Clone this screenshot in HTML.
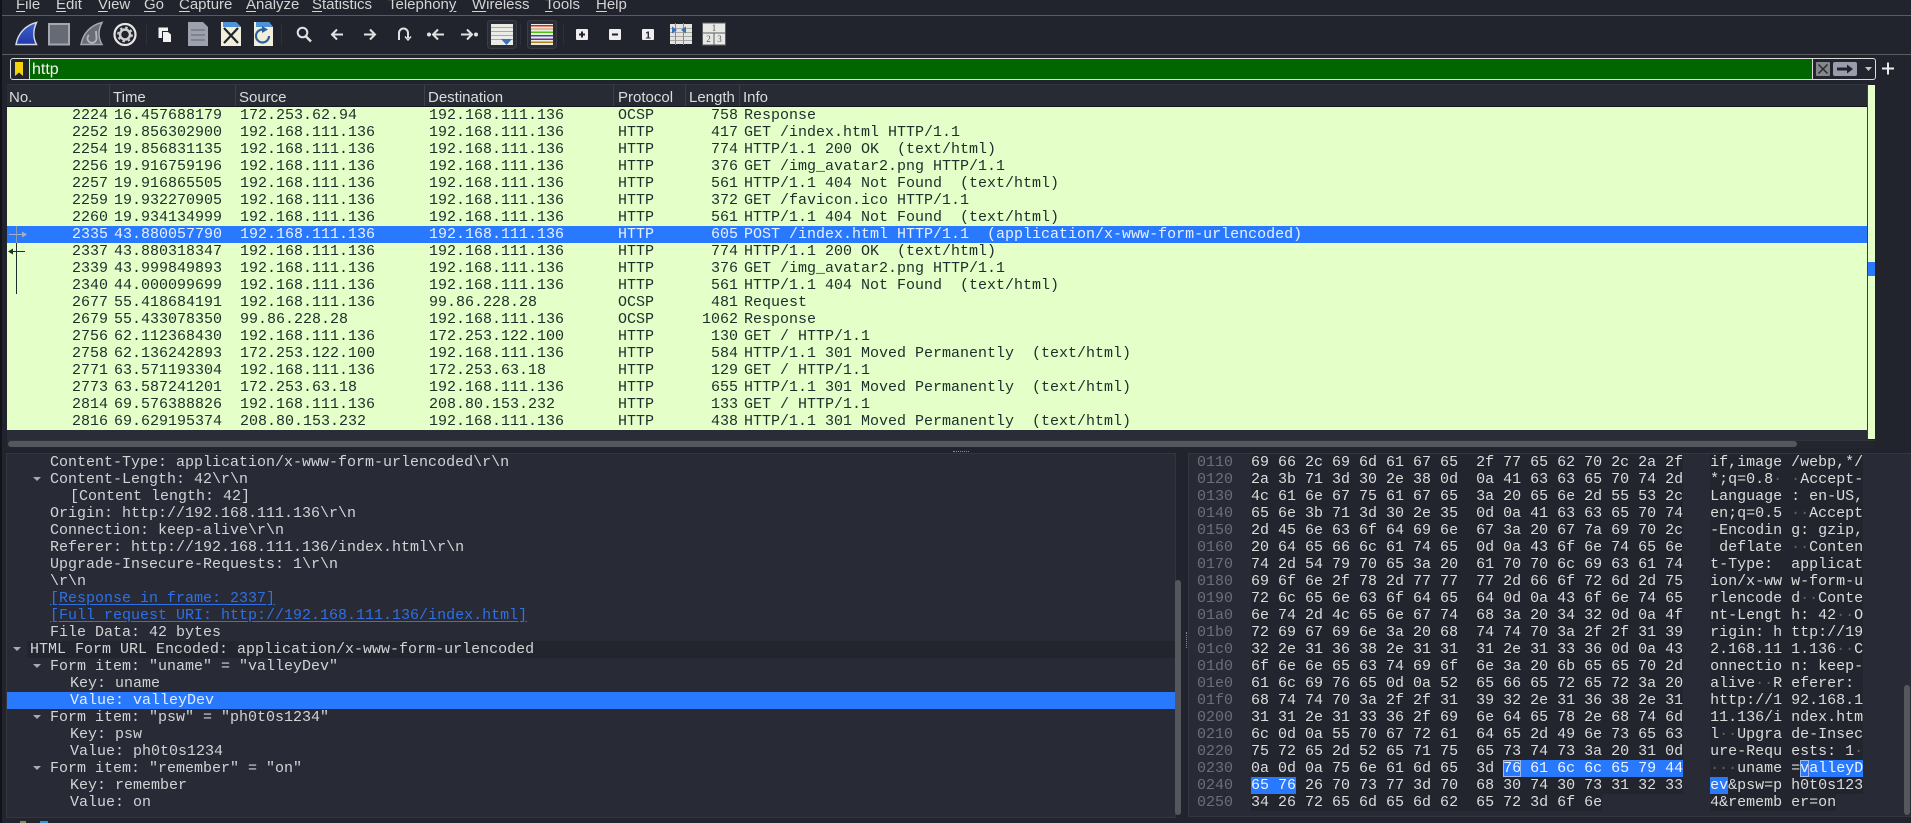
<!DOCTYPE html>
<html><head><meta charset="utf-8"><title>Wireshark</title>
<style>
html,body{margin:0;padding:0;width:1911px;height:823px;overflow:hidden;background:#21242c}
body{position:relative;font-family:"Liberation Sans",sans-serif}
.a{position:absolute}
.m{position:absolute;top:-4px;font-size:15px;line-height:17px;color:#d4d4d4;height:17px}
.m u{text-decoration:underline;text-underline-offset:2px}
.h{position:absolute;top:85px;height:21px;line-height:25px;font-size:15px;color:#dcdcdc}
.s{position:absolute;top:85px;width:1px;height:21px;background:#3b3f49}
#list{position:absolute;left:7px;top:107px;width:1860px;height:323px;background:#e4ffc7;overflow:hidden}
.r{position:absolute;left:-7px;width:1867px;height:17px;font:15px/17px "Liberation Mono",monospace;color:#1f2d2d;white-space:pre}
.r span{position:absolute;top:0}
.r .n{left:72px;width:36px;text-align:right}.r .t{left:114px}.r .o{left:240px}.r .d{left:429px}.r .p{left:618px}.r .l{left:688px;width:50px;text-align:right}.r .i{left:744px}
.r.sel{background:#2979ff;color:#e8f0ff}
.r.sel{left:0;width:1860px}
.r.sel span{margin-left:-7px}
.tr{position:absolute;height:17px;font:15px/17px "Liberation Mono",monospace;color:#d3d3d6;white-space:pre}
.lk{color:#2e70e6;text-decoration:underline;text-underline-offset:2px}
.ar{position:absolute;width:0;height:0;border-left:4px solid transparent;border-right:4px solid transparent;border-top:4px solid #a9abb2}
#hex{position:absolute;left:1197px;top:454px;font:15px/17px "Liberation Mono",monospace;color:#dcdcdc}
#hex div{height:17px;white-space:pre}
#hex b{font-weight:normal;color:#5f626c}
#hex i{font-style:normal;background:#22252d}
#hex em{font-style:normal;background:#2979ff;color:#eef4ff}
#hex em.c{outline:1px solid #9fb8e8;outline-offset:-1px}
#hex q{quotes:none;color:#6c6f78}
</style></head><body>

<div class="a" style="left:0;top:0;width:2px;height:823px;background:#111318"></div>

<div class="m" style="left:16px"><u>F</u>ile</div>
<div class="m" style="left:56px"><u>E</u>dit</div>
<div class="m" style="left:98px"><u>V</u>iew</div>
<div class="m" style="left:144px"><u>G</u>o</div>
<div class="m" style="left:179px"><u>C</u>apture</div>
<div class="m" style="left:246px"><u>A</u>nalyze</div>
<div class="m" style="left:312px"><u>S</u>tatistics</div>
<div class="m" style="left:388px">Telephon<u>y</u></div>
<div class="m" style="left:472px"><u>W</u>ireless</div>
<div class="m" style="left:545px"><u>T</u>ools</div>
<div class="m" style="left:596px"><u>H</u>elp</div>
<div class="a" style="left:2px;top:15px;width:1909px;height:1px;background:#5a5c60"></div>
<div class="a" style="left:2px;top:54px;width:1909px;height:1px;background:#5a5c60"></div>

<svg class="a" style="left:0;top:16px" width="740" height="38" viewBox="0 16 740 38" xmlns="http://www.w3.org/2000/svg">
<defs><linearGradient id="b" x1="0" y1="0" x2="0" y2="1"><stop offset="0" stop-color="#3f63d0"/><stop offset="1" stop-color="#2238a8"/></linearGradient></defs>
<path d="M16 44.500C18 33 26 25 36.500 22.500C33 30 33 38 36.500 44.500Z" fill="url(#b)" stroke="#d3d7e2" stroke-width="1.500"/>
<rect x="49" y="24" width="20" height="20.500" fill="#666a74" stroke="#a4a7af" stroke-width="2"/>
<path d="M81 44.500C83 33 91 25 102 22.500C98 30 98 38 102 44.500Z" fill="#6a6d76" stroke="#a4a7af" stroke-width="1.500"/>
<path d="M96 31L96.500 38A4.500 4.500 0 1 1 89 35" fill="none" stroke="#b4b6bc" stroke-width="1.800"/>
<circle cx="125" cy="34.500" r="10.500" fill="none" stroke="#e6e6e6" stroke-width="2.200"/>
<circle cx="125" cy="34.500" r="5" fill="none" stroke="#d0d0d0" stroke-width="2.500"/>
<circle cx="125" cy="34.500" r="7" fill="none" stroke="#d0d0d0" stroke-width="1.800" stroke-dasharray="2.500 3"/>
<path d="M158.500 27.500H168V31H162V38H158.500Z" fill="#f2f2f2"/><path d="M163 32H168L171 34.500V42H163Z" fill="#f2f2f2"/>
<path d="M188 22H203L208 27V46H188Z" fill="#9da1ad"/><g fill="#7f838f"><rect x="191" y="29" width="14" height="2"/><rect x="191" y="34" width="14" height="2"/><rect x="191" y="39" width="14" height="2"/></g>
<path d="M221 22H236L241 27V46H221Z" fill="#f1efd9"/><path d="M223 22H236L241 27H223Z" fill="#4d93d6"/><path d="M224 28L238 43M238 28L224 43" stroke="#20242c" stroke-width="2.200"/>
<path d="M254 22H269L273 27V46H254Z" fill="#f1efd9"/><path d="M256 22H269L273 27H256Z" fill="#4d93d6"/><path d="M269 36A6.500 6.500 0 1 1 263 29.500" fill="none" stroke="#2d5f9f" stroke-width="2.200"/><path d="M262 26L268 29.500L262 33Z" fill="#2d5f9f"/>
<g stroke="#2d3038"><path d="M146.500 24V45M281.500 24V45M520.500 24V45M563.500 24V45"/></g>
<g fill="none" stroke="#e2e2e2" stroke-width="2">
<circle cx="302.500" cy="32.500" r="4.800"/><path d="M306 36.500L311 41.500" stroke-width="2.500"/>
<path d="M343 34.500H332M337 29.500L332 34.500L337 39.500"/>
<path d="M364 34.500H375M370 29.500L375 34.500L370 39.500"/>
<path d="M399 40V33A4.500 4.500 0 0 1 408 33V38"/><path d="M405 36.500L408 40L411 36.500" stroke-width="1.500"/>
<path d="M444 34.500H433M438 29.500L433 34.500L438 39.500"/>
<path d="M461 34.500H472M467 29.500L472 34.500L467 39.500"/>
</g>
<circle cx="429" cy="34.500" r="2" fill="#e2e2e2"/><circle cx="476" cy="34.500" r="2" fill="#e2e2e2"/>
<rect x="487.500" y="20.500" width="29" height="28" rx="3" fill="#2a2d36" stroke="#3a3d47"/>
<rect x="491" y="24" width="22" height="21" fill="#ecece6"/><g fill="#a9aaa5"><rect x="491" y="27" width="22" height="1"/><rect x="491" y="31" width="22" height="1"/><rect x="491" y="35" width="22" height="1"/><rect x="491" y="39" width="22" height="1"/></g><path d="M501 39H512L506.500 45Z" fill="#3b6fb8"/>
<rect x="527.500" y="20.500" width="29" height="28" rx="3" fill="#2a2d36" stroke="#3a3d47"/>
<rect x="531" y="24" width="22" height="21" fill="#ecece6"/>
<rect x="531" y="25" width="22" height="1.500" fill="#e02020"/><rect x="531" y="28.500" width="22" height="1" fill="#d09030"/><rect x="531" y="31.500" width="22" height="1.500" fill="#50c010"/><rect x="531" y="35" width="22" height="1.500" fill="#3050b0"/><rect x="531" y="38.500" width="22" height="1.500" fill="#703090"/><rect x="531" y="41.500" width="22" height="1.500" fill="#b08020"/>
<rect x="576" y="29" width="12" height="11" rx="1" fill="#efefef"/><path d="M579 34.500H585M582 31.500V37.500" stroke="#22252d" stroke-width="2"/>
<rect x="609" y="29" width="12" height="11" rx="1" fill="#efefef"/><path d="M612 34.500H618" stroke="#22252d" stroke-width="2"/>
<rect x="642" y="29" width="12" height="11" rx="1" fill="#efefef"/><text x="648" y="38.500" font-family="Liberation Sans" font-size="10" font-weight="bold" text-anchor="middle" fill="#22252d">1</text>
<rect x="670" y="24" width="22" height="20" fill="#e4e4e0"/><g fill="#a8a8a4"><rect x="670" y="28" width="22" height="1"/><rect x="670" y="32" width="22" height="1"/><rect x="670" y="36" width="22" height="1"/><rect x="670" y="40" width="22" height="1"/></g><path d="M675.500 23V45M683.500 23V45" stroke="#8a8a88"/><path d="M672 26.500L677 30L672 33.500ZM686 26.500L681 30L686 33.500Z" fill="#3b6fb8"/>
<rect x="702.500" y="23" width="23" height="22" fill="#e8e8e4" stroke="#5c5e64"/><path d="M703 33H725M714 33V45" stroke="#5c5e64"/>
<text x="714" y="31" font-family="Liberation Serif" font-size="9" text-anchor="middle" fill="#555">1</text><text x="708.500" y="42" font-family="Liberation Serif" font-size="9" text-anchor="middle" fill="#555">2</text><text x="719.500" y="42" font-family="Liberation Serif" font-size="9" text-anchor="middle" fill="#555">3</text>
</svg>

<!-- filter -->
<div class="a" style="left:10px;top:58px;width:1864px;height:20px;border:1px solid #dcdcdc;border-radius:3px;background:#22252d"></div>
<div class="a" style="left:29px;top:59px;width:1784px;height:20px;background:#016500;border-left:1px solid #dcdcdc;border-right:1px solid #dcdcdc;border-top:0;box-sizing:border-box"></div>
<svg class="a" style="left:14px;top:62px" width="10" height="14" xmlns="http://www.w3.org/2000/svg"><path d="M1 0H9V14L5 10.500L1 14Z" fill="#f2d40c"/></svg>
<div class="a" style="left:32px;top:60px;font-size:16px;line-height:20px;color:#f4f4f4">http</div>
<svg class="a" style="left:1814px;top:60px" width="90" height="18" xmlns="http://www.w3.org/2000/svg">
<rect x="2" y="2" width="14" height="14" rx="1" fill="#86878a"/><path d="M4.500 4.500L13.500 13.500M13.500 4.500L4.500 13.500" stroke="#2a2c33" stroke-width="1.500"/>
<rect x="19" y="2" width="24" height="14" rx="2" fill="#9a9cab"/><path d="M23 9H35" stroke="#20232b" stroke-width="3"/><path d="M33 4.500L39 9L33 13.500Z" fill="#20232b"/>
<path d="M51 7H58L54.500 11Z" fill="#c4c5c9"/>
<path d="M68 8.500H80M74 2.500V14.500" stroke="#ececec" stroke-width="2"/>
</svg>

<!-- packet header -->
<div class="a" style="left:7px;top:84px;width:1860px;height:22px;background:#272b34;border-top:1px solid #33363f;box-sizing:border-box"></div>
<div class="a" style="left:7px;top:106px;width:1860px;height:1px;background:#14161b"></div>
<div class="h" style="left:9px">No.</div><div class="s" style="left:109px"></div>
<div class="h" style="left:113px">Time</div><div class="s" style="left:235px"></div>
<div class="h" style="left:239px">Source</div><div class="s" style="left:424px"></div>
<div class="h" style="left:428px">Destination</div><div class="s" style="left:613px"></div>
<div class="h" style="left:618px">Protocol</div><div class="s" style="left:685px"></div>
<div class="h" style="left:689px">Length</div><div class="s" style="left:739px"></div>
<div class="h" style="left:743px">Info</div>

<div id="list">
<div class="r" style="top:0"><span class="n">2224</span><span class="t">16.457688179</span><span class="o">172.253.62.94</span><span class="d">192.168.111.136</span><span class="p">OCSP</span><span class="l">758</span><span class="i">Response</span></div>
<div class="r" style="top:17px"><span class="n">2252</span><span class="t">19.856302900</span><span class="o">192.168.111.136</span><span class="d">192.168.111.136</span><span class="p">HTTP</span><span class="l">417</span><span class="i">GET /index.html HTTP/1.1</span></div>
<div class="r" style="top:34px"><span class="n">2254</span><span class="t">19.856831135</span><span class="o">192.168.111.136</span><span class="d">192.168.111.136</span><span class="p">HTTP</span><span class="l">774</span><span class="i">HTTP/1.1 200 OK  (text/html)</span></div>
<div class="r" style="top:51px"><span class="n">2256</span><span class="t">19.916759196</span><span class="o">192.168.111.136</span><span class="d">192.168.111.136</span><span class="p">HTTP</span><span class="l">376</span><span class="i">GET /img_avatar2.png HTTP/1.1</span></div>
<div class="r" style="top:68px"><span class="n">2257</span><span class="t">19.916865505</span><span class="o">192.168.111.136</span><span class="d">192.168.111.136</span><span class="p">HTTP</span><span class="l">561</span><span class="i">HTTP/1.1 404 Not Found  (text/html)</span></div>
<div class="r" style="top:85px"><span class="n">2259</span><span class="t">19.932270905</span><span class="o">192.168.111.136</span><span class="d">192.168.111.136</span><span class="p">HTTP</span><span class="l">372</span><span class="i">GET /favicon.ico HTTP/1.1</span></div>
<div class="r" style="top:102px"><span class="n">2260</span><span class="t">19.934134999</span><span class="o">192.168.111.136</span><span class="d">192.168.111.136</span><span class="p">HTTP</span><span class="l">561</span><span class="i">HTTP/1.1 404 Not Found  (text/html)</span></div>
<div class="r sel" style="top:119px"><span class="n">2335</span><span class="t">43.880057790</span><span class="o">192.168.111.136</span><span class="d">192.168.111.136</span><span class="p">HTTP</span><span class="l">605</span><span class="i">POST /index.html HTTP/1.1  (application/x-www-form-urlencoded)</span></div>
<div class="r" style="top:136px"><span class="n">2337</span><span class="t">43.880318347</span><span class="o">192.168.111.136</span><span class="d">192.168.111.136</span><span class="p">HTTP</span><span class="l">774</span><span class="i">HTTP/1.1 200 OK  (text/html)</span></div>
<div class="r" style="top:153px"><span class="n">2339</span><span class="t">43.999849893</span><span class="o">192.168.111.136</span><span class="d">192.168.111.136</span><span class="p">HTTP</span><span class="l">376</span><span class="i">GET /img_avatar2.png HTTP/1.1</span></div>
<div class="r" style="top:170px"><span class="n">2340</span><span class="t">44.000099699</span><span class="o">192.168.111.136</span><span class="d">192.168.111.136</span><span class="p">HTTP</span><span class="l">561</span><span class="i">HTTP/1.1 404 Not Found  (text/html)</span></div>
<div class="r" style="top:187px"><span class="n">2677</span><span class="t">55.418684191</span><span class="o">192.168.111.136</span><span class="d">99.86.228.28</span><span class="p">OCSP</span><span class="l">481</span><span class="i">Request</span></div>
<div class="r" style="top:204px"><span class="n">2679</span><span class="t">55.433078350</span><span class="o">99.86.228.28</span><span class="d">192.168.111.136</span><span class="p">OCSP</span><span class="l">1062</span><span class="i">Response</span></div>
<div class="r" style="top:221px"><span class="n">2756</span><span class="t">62.112368430</span><span class="o">192.168.111.136</span><span class="d">172.253.122.100</span><span class="p">HTTP</span><span class="l">130</span><span class="i">GET / HTTP/1.1</span></div>
<div class="r" style="top:238px"><span class="n">2758</span><span class="t">62.136242893</span><span class="o">172.253.122.100</span><span class="d">192.168.111.136</span><span class="p">HTTP</span><span class="l">584</span><span class="i">HTTP/1.1 301 Moved Permanently  (text/html)</span></div>
<div class="r" style="top:255px"><span class="n">2771</span><span class="t">63.571193304</span><span class="o">192.168.111.136</span><span class="d">172.253.63.18</span><span class="p">HTTP</span><span class="l">129</span><span class="i">GET / HTTP/1.1</span></div>
<div class="r" style="top:272px"><span class="n">2773</span><span class="t">63.587241201</span><span class="o">172.253.63.18</span><span class="d">192.168.111.136</span><span class="p">HTTP</span><span class="l">655</span><span class="i">HTTP/1.1 301 Moved Permanently  (text/html)</span></div>
<div class="r" style="top:289px"><span class="n">2814</span><span class="t">69.576388826</span><span class="o">192.168.111.136</span><span class="d">208.80.153.232</span><span class="p">HTTP</span><span class="l">133</span><span class="i">GET / HTTP/1.1</span></div>
<div class="r" style="top:306px"><span class="n">2816</span><span class="t">69.629195374</span><span class="o">208.80.153.232</span><span class="d">192.168.111.136</span><span class="p">HTTP</span><span class="l">438</span><span class="i">HTTP/1.1 301 Moved Permanently  (text/html)</span></div>
</div>
<svg class="a" style="left:7px;top:226px" width="22" height="70" xmlns="http://www.w3.org/2000/svg">
<path d="M9.500 0V17" stroke="#8a9bb8"/><path d="M2 8.500H19" stroke="#a3b0c4"/><path d="M15 5.500L20 8.500L15 11.500Z" fill="#a3b0c4"/>
<path d="M9.500 17V68" stroke="#1f2d2d"/><path d="M4 25.500H18" stroke="#1f2d2d"/><path d="M6 22.500L1 25.500L6 28.500Z" fill="#1f2d2d"/>
</svg>

<!-- scroll map -->
<div class="a" style="left:1867px;top:85px;width:1px;height:354px;background:#39403a"></div>
<div class="a" style="left:1868px;top:85px;width:7px;height:354px;background:#e4ffc7"></div>
<div class="a" style="left:1868px;top:262px;width:7px;height:14px;background:#2979ff"></div>
<div class="a" style="left:7px;top:430px;width:1860px;height:10px;background:#2a2c37"></div>

<!-- horizontal scrollbar -->
<div class="a" style="left:7px;top:440px;width:1868px;height:8px;background:#23262e;border-top:1px solid #2f3239;box-sizing:border-box"></div>
<div class="a" style="left:8px;top:441px;width:1789px;height:6px;border-radius:3px;background:#55575c"></div>
<div class="a" style="left:953px;top:451px;width:16px;height:0;border-top:1px dotted #8a8c92"></div>

<!-- proto panel -->
<div class="a" style="left:6px;top:453px;width:1168px;height:363px;background:#282a36;border:1px solid #34363f;box-sizing:content-box"></div>
<div class="a" style="left:27px;top:641px;width:1148px;height:17px;background:#23252e"></div>
<div class="a" style="left:7px;top:692px;width:1168px;height:17px;background:#2979ff"></div>
<div class="tr" style="left:50px;top:454px">Content-Type: application/x-www-form-urlencoded\r\n</div>
<div class="ar" style="left:33px;top:477px"></div>
<div class="tr" style="left:50px;top:471px">Content-Length: 42\r\n</div>
<div class="tr" style="left:70px;top:488px">[Content length: 42]</div>
<div class="tr" style="left:50px;top:505px">Origin: http://192.168.111.136\r\n</div>
<div class="tr" style="left:50px;top:522px">Connection: keep-alive\r\n</div>
<div class="tr" style="left:50px;top:539px">Referer: http://192.168.111.136/index.html\r\n</div>
<div class="tr" style="left:50px;top:556px">Upgrade-Insecure-Requests: 1\r\n</div>
<div class="tr" style="left:50px;top:573px">\r\n</div>
<div class="tr lk" style="left:50px;top:590px">[Response in frame: 2337]</div>
<div class="tr lk" style="left:50px;top:607px">[Full request URI: http://192.168.111.136/index.html]</div>
<div class="tr" style="left:50px;top:624px">File Data: 42 bytes</div>
<div class="ar" style="left:13px;top:647px"></div>
<div class="tr" style="left:30px;top:641px">HTML Form URL Encoded: application/x-www-form-urlencoded</div>
<div class="ar" style="left:33px;top:664px"></div>
<div class="tr" style="left:50px;top:658px">Form item: "uname" = "valleyDev"</div>
<div class="tr" style="left:70px;top:675px">Key: uname</div>
<div class="tr" style="left:70px;top:692px;color:#e2ebff">Value: valleyDev</div>
<div class="ar" style="left:33px;top:715px"></div>
<div class="tr" style="left:50px;top:709px">Form item: "psw" = "ph0t0s1234"</div>
<div class="tr" style="left:70px;top:726px">Key: psw</div>
<div class="tr" style="left:70px;top:743px">Value: ph0t0s1234</div>
<div class="ar" style="left:33px;top:766px"></div>
<div class="tr" style="left:50px;top:760px">Form item: "remember" = "on"</div>
<div class="tr" style="left:70px;top:777px">Key: remember</div>
<div class="tr" style="left:70px;top:794px">Value: on</div>

<div class="a" style="left:1175px;top:580px;width:6px;height:235px;border-radius:3px;background:#55575c"></div>
<div class="a" style="left:1186px;top:632px;width:0;height:16px;border-left:1px dotted #8a8c92"></div>

<!-- hex panel -->
<div class="a" style="left:1188px;top:453px;width:723px;height:364px;background:#282a36;border:1px solid #34363f;border-right:0;box-sizing:border-box"></div>
<div class="a" style="left:1904px;top:685px;width:6px;height:130px;border-radius:3px;background:#55575c"></div>
<div id="hex"><div><q>0110</q>  <i>69 66 2c 69 6d 61 67 65  2f 77 65 62 70 2c 2a 2f</i>   <i>if,image /webp,*/</i></div><div><q>0120</q>  <i>2a 3b 71 3d 30 2e 38 0d  0a 41 63 63 65 70 74 2d</i>   <i>*;q=0.8<b>·</b> <b>·</b>Accept-</i></div><div><q>0130</q>  <i>4c 61 6e 67 75 61 67 65  3a 20 65 6e 2d 55 53 2c</i>   <i>Language : en-US,</i></div><div><q>0140</q>  <i>65 6e 3b 71 3d 30 2e 35  0d 0a 41 63 63 65 70 74</i>   <i>en;q=0.5 <b>··</b>Accept</i></div><div><q>0150</q>  <i>2d 45 6e 63 6f 64 69 6e  67 3a 20 67 7a 69 70 2c</i>   <i>-Encodin g: gzip,</i></div><div><q>0160</q>  <i>20 64 65 66 6c 61 74 65  0d 0a 43 6f 6e 74 65 6e</i>   <i> deflate <b>··</b>Conten</i></div><div><q>0170</q>  <i>74 2d 54 79 70 65 3a 20  61 70 70 6c 69 63 61 74</i>   <i>t-Type:  applicat</i></div><div><q>0180</q>  <i>69 6f 6e 2f 78 2d 77 77  77 2d 66 6f 72 6d 2d 75</i>   <i>ion/x-ww w-form-u</i></div><div><q>0190</q>  <i>72 6c 65 6e 63 6f 64 65  64 0d 0a 43 6f 6e 74 65</i>   <i>rlencode d<b>··</b>Conte</i></div><div><q>01a0</q>  <i>6e 74 2d 4c 65 6e 67 74  68 3a 20 34 32 0d 0a 4f</i>   <i>nt-Lengt h: 42<b>··</b>O</i></div><div><q>01b0</q>  <i>72 69 67 69 6e 3a 20 68  74 74 70 3a 2f 2f 31 39</i>   <i>rigin: h ttp://19</i></div><div><q>01c0</q>  <i>32 2e 31 36 38 2e 31 31  31 2e 31 33 36 0d 0a 43</i>   <i>2.168.11 1.136<b>··</b>C</i></div><div><q>01d0</q>  <i>6f 6e 6e 65 63 74 69 6f  6e 3a 20 6b 65 65 70 2d</i>   <i>onnectio n: keep-</i></div><div><q>01e0</q>  <i>61 6c 69 76 65 0d 0a 52  65 66 65 72 65 72 3a 20</i>   <i>alive<b>··</b>R eferer: </i></div><div><q>01f0</q>  <i>68 74 74 70 3a 2f 2f 31  39 32 2e 31 36 38 2e 31</i>   <i>http://1 92.168.1</i></div><div><q>0200</q>  <i>31 31 2e 31 33 36 2f 69  6e 64 65 78 2e 68 74 6d</i>   <i>11.136/i ndex.htm</i></div><div><q>0210</q>  <i>6c 0d 0a 55 70 67 72 61  64 65 2d 49 6e 73 65 63</i>   <i>l<b>··</b>Upgra de-Insec</i></div><div><q>0220</q>  <i>75 72 65 2d 52 65 71 75  65 73 74 73 3a 20 31 0d</i>   <i>ure-Requ ests: 1<b>·</b></i></div><div><q>0230</q>  <i>0a 0d 0a 75 6e 61 6d 65  3d </i><em class="c">76</em><em> 61 6c 6c 65 79 44</em>   <i><b>···</b>uname =</i><em class="c">v</em><em>alleyD</em></div><div><q>0240</q>  <em>65 76</em><i> 26 70 73 77 3d 70  68 30 74 30 73 31 32 33</i>   <em>ev</em><i>&amp;psw=p h0t0s123</i></div><div><q>0250</q>  <i>34 26 72 65 6d 65 6d 62  65 72 3d 6f 6e</i>            <i>4&amp;rememb er=on</i></div></div>

<div class="a" style="left:20px;top:821px;width:6px;height:2px;background:#8a8458"></div>
<div class="a" style="left:40px;top:821px;width:8px;height:2px;background:#3c8fd0"></div>
</body></html>
